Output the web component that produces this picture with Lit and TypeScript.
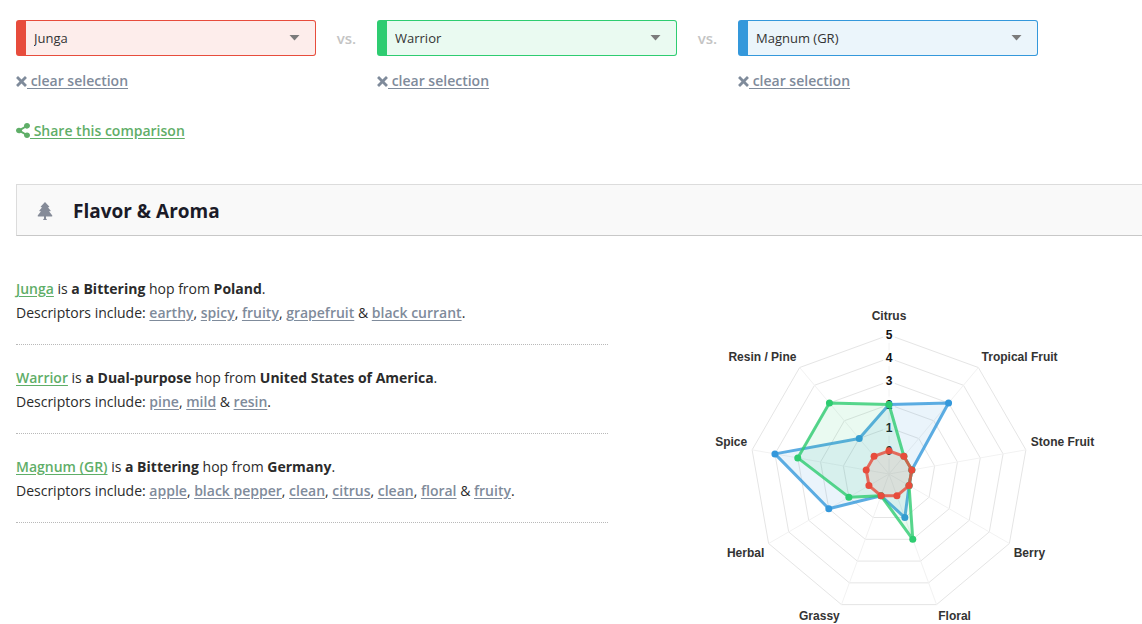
import { LitElement, html, svg, css } from "lit";
import { customElement, property } from "lit/decorators.js";

interface Hop {
  name: string;
  tone: "red" | "green" | "blue";
  purpose: string;
  country: string;
  descriptors: string[];
  values: number[];
}

const AXES = ["Citrus", "Tropical Fruit", "Stone Fruit", "Berry", "Floral", "Grassy", "Herbal", "Spice", "Resin / Pine"];

const HOPS: Hop[] = [
  {
    name: "Junga",
    tone: "red",
    purpose: "a Bittering",
    country: "Poland",
    descriptors: ["earthy", "spicy", "fruity", "grapefruit", "black currant"],
    values: [0, 0, 0, 0, 0, 0, 0, 0, 0],
  },
  {
    name: "Warrior",
    tone: "green",
    purpose: "a Dual-purpose",
    country: "United States of America",
    descriptors: ["pine", "mild", "resin"],
    values: [2, 0, 0, 0, 2, 0, 1, 3, 3],
  },
  {
    name: "Magnum (GR)",
    tone: "blue",
    purpose: "a Bittering",
    country: "Germany",
    descriptors: ["apple", "black pepper", "clean", "citrus", "clean", "floral", "fruity"],
    values: [2, 3, 0, 0, 1, 0, 2, 4, 1],
  },
];

@customElement("flavor-radar")
class FlavorRadar extends LitElement {
  @property({ attribute: false }) hops: Hop[] = [];

  static styles = css`
    :host { display: block; width: 100%; max-width: 440px; }
    .chart { display: block; width: 100%; height: auto; font-family: "Liberation Sans", Arial, sans-serif; font-size: 12px; font-weight: 700; }
    .ring { fill: none; stroke: #e5e5e5; }
    .spoke { stroke: #f2f2f2; }
    .backdrop { fill: #fff; fill-opacity: 0.75; }
    .tick { fill: #111; text-anchor: middle; }
    .label { fill: #333; }
    .middle { text-anchor: middle; }
    .end { text-anchor: end; }
    .area { stroke-width: 3; stroke-opacity: 0.8; fill-opacity: 0.1; stroke-linejoin: round; }
    .area.red { fill: #e74c3c; stroke: #e74c3c; }
    .area.green { fill: #2ecc71; stroke: #2ecc71; }
    .area.blue { fill: #3498db; stroke: #3498db; }
    .dot.red { fill: #e74c3c; }
    .dot.green { fill: #2ecc71; }
    .dot.blue { fill: #3498db; }
  `;

  private cx = 221;
  private cy = 174;
  private radius = 139;

  private at(axis: number, r: number): [number, number] {
    const angle = (axis / AXES.length) * Math.PI * 2;
    return [this.cx + Math.sin(angle) * r, this.cy - Math.cos(angle) * r];
  }

  // The scale starts at -1 in the centre and ends at 5 on the outer ring.
  private scale(value: number) {
    return ((value + 1) / 6) * this.radius;
  }

  private points(values: number[]) {
    return values.map((v, i) => this.at(i, this.scale(v)).map((n) => n.toFixed(2)).join(",")).join(" ");
  }

  private label(name: string, i: number) {
    const [x, y] = this.at(i, this.radius + 5);
    const side = i === 0 ? "middle" : i > AXES.length / 2 ? "end" : "start";
    const shift = i === 0 ? -14 : y < this.cy ? -7 : 7;
    return svg`<text class="label ${side}" x=${x} y=${y + shift + 4}>${name}</text>`;
  }

  render() {
    const ticks = [0, 1, 2, 3, 4, 5];
    return html`
      <svg class="chart" viewBox="0 0 440 323" role="img" aria-label="Flavor and aroma comparison">
        ${ticks.map((t) => svg`<polygon class="ring" points=${this.points(AXES.map(() => t))}></polygon>`)}
        ${AXES.map((_, i) => {
          const [x, y] = this.at(i, this.radius);
          return svg`<line class="spoke" x1=${this.cx} y1=${this.cy} x2=${x} y2=${y}></line>`;
        })}
        ${ticks.map((t) => {
          const y = this.cy - this.scale(t);
          return svg`
            <rect class="backdrop" x=${this.cx - 6} y=${y - 8} width="12" height="16"></rect>
            <text class="tick" x=${this.cx} y=${y + 4}>${t}</text>`;
        })}
        ${[...this.hops].reverse().map((hop) => svg`
          <polygon class="area ${hop.tone}" points=${this.points(hop.values)}></polygon>
          ${hop.values.map((v, i) => {
            const [x, y] = this.at(i, this.scale(v));
            return svg`<circle class="dot ${hop.tone}" cx=${x} cy=${y} r="3.5"></circle>`;
          })}`)}
        ${AXES.map((name, i) => this.label(name, i))}
      </svg>`;
  }
}

@customElement("app-root")
class AppRoot extends LitElement {
  static styles = css`
    :host {
      display: block;
      padding: 20px 0 0 16px;
      background: #fff;
      color: #2b2b2b;
      font-family: "Open Sans", "Noto Sans", sans-serif;
      font-size: 14px;
      line-height: 24px;
    }
    a { font-weight: 600; text-decoration: underline; text-underline-offset: 2px; }
    .pickers { display: flex; }
    .picker { flex: 0 1 300px; min-width: 0; }
    .select {
      display: block;
      box-sizing: border-box;
      width: 100%;
      height: 36px;
      padding: 0 36px 0 8px;
      border: 1px solid;
      border-left-width: 10px;
      border-radius: 3px;
      appearance: none;
      color: #333;
      font: 13px/20px "Open Sans", "Noto Sans", sans-serif;
    }
    .field { display: grid; align-items: center; }
    .field > * { grid-area: 1 / 1; }
    .caret { justify-self: end; margin-right: 16px; width: 11px; height: 6px; fill: #7b7b7b; pointer-events: none; }
    .select.red { border-color: #e74c3c; background: #fdedeb; }
    .select.green { border-color: #2ecc71; background: #eafaf1; }
    .select.blue { border-color: #3498db; background: #ebf5fb; }
    .versus { flex: 0 0 61px; line-height: 36px; text-align: center; color: #c4c4c4; font-size: 15px; font-weight: 600; }
    .clear { display: inline-block; margin-top: 13px; color: #7f8b9b; }
    .cross { width: 11px; height: 11px; fill: currentColor; vertical-align: -1px; }
    .share { display: inline-block; margin-top: 26px; color: #5fae68; }
    .nodes { width: 14px; height: 15px; fill: currentColor; vertical-align: -2px; }
    .section {
      display: flex;
      align-items: center;
      gap: 20px;
      box-sizing: border-box;
      height: 52px;
      margin-top: 41px;
      padding: 2px 0 0 20px;
      border: solid #dcdcdc;
      border-width: 1px 0 1px 1px;
      border-bottom-color: #c8c8c8;
      background: #f9f9f9;
    }
    .tree { width: 16px; height: 20px; fill: #858b98; }
    .title { margin: 0; color: #1b1b28; font-size: 19px; font-weight: 700; }
    .columns { display: grid; grid-template-columns: minmax(0, 7fr) minmax(0, 6fr); gap: 26px; padding-top: 40px; }
    .hop { margin: 0 0 20px; padding: 1px 0 19px; border-bottom: 1px dotted #b9b9b9; }
    .name { color: #5fae68; }
    .tag { color: #7f8b9b; }
    .radar { display: flex; justify-content: center; padding-top: 24px; }
  `;

  private picker(hop: Hop) {
    return html`
      <div class="picker">
        <div class="field">
          <select class="select ${hop.tone}" aria-label="Hop to compare">
            ${HOPS.map((h) => html`<option ?selected=${h === hop}>${h.name}</option>`)}
          </select>
          <svg class="caret" viewBox="0 0 11 6" aria-hidden="true"><path d="M.5 0h10L5.500 5.500z"/></svg>
        </div>
        <a class="clear" href="#clear"><svg class="cross" viewBox="0 0 11 11" aria-hidden="true"><path d="M2.300.3 5.500 3.500 8.700.3Q9 0 9.300.3L10.700 1.700Q11 2 10.700 2.300L7.500 5.500 10.700 8.700Q11 9 10.700 9.300L9.300 10.700Q9 11 8.700 10.700L5.500 7.500 2.300 10.700Q2 11 1.700 10.700L.3 9.300Q0 9 .3 8.700L3.500 5.500.3 2.300Q0 2 .3 1.700L1.700.3Q2 0 2.300.3z"/></svg> clear selection</a>
      </div>`;
  }

  private summary(hop: Hop) {
    const last = hop.descriptors.length - 1;
    return html`
      <p class="hop">
        <a class="name" href="#hop">${hop.name}</a> is <b>${hop.purpose}</b> hop from <b>${hop.country}</b>.<br />
        Descriptors include: ${hop.descriptors.map((d, i) => html`${i === 0 ? "" : i === last ? " & " : ", "}<a class="tag" href="#tag">${d}</a>`)}.
      </p>`;
  }

  render() {
    return html`
      <div class="pickers">
        ${HOPS.map((hop, i) => html`${i ? html`<span class="versus">vs.</span>` : ""}${this.picker(hop)}`)}
      </div>
      <a class="share" href="#share"><svg class="nodes" viewBox="0 0 448 512" preserveAspectRatio="none" aria-hidden="true"><path d="M352 320c-22.600 0-43.400 7.800-59.800 20.900l-102.500-64.100a96.600 96.600 0 0 0 0-41.700l102.500-64.100C308.600 184.200 329.400 192 352 192c53 0 96-43 96-96S405 0 352 0s-96 43-96 96c0 7.200.8 14.100 2.300 20.800L155.800 180.900C139.400 167.800 118.600 160 96 160c-53 0-96 43-96 96s43 96 96 96c22.600 0 43.400-7.800 59.800-20.900l102.500 64.100A96.300 96.300 0 0 0 256 416c0 53 43 96 96 96s96-43 96-96-43-96-96-96z"/></svg> Share this comparison</a>
      <header class="section">
        <svg class="tree" viewBox="0 0 16 20" aria-hidden="true"><path d="M8 1 12.200 5.600Q12.500 6.200 11.800 6.200H10.800L13.600 9.600Q13.900 10.200 13.200 10.200H12L15.300 14.600Q15.600 15.500 14.700 15.500H9V17.500L10 18.700Q10 19 9.700 19H6.300Q6 19 6 18.700L7 17.500V15.500H1.300Q.4 15.500.7 14.600L4 10.200H2.800Q2.100 10.200 2.400 9.600L5.200 6.200H4.200Q3.500 6.200 3.800 5.600z"/></svg>
        <h2 class="title">Flavor &amp; Aroma</h2>
      </header>
      <main class="columns">
        <div>${HOPS.map((hop) => this.summary(hop))}</div>
        <div class="radar"><flavor-radar .hops=${HOPS}></flavor-radar></div>
      </main>`;
  }
}
